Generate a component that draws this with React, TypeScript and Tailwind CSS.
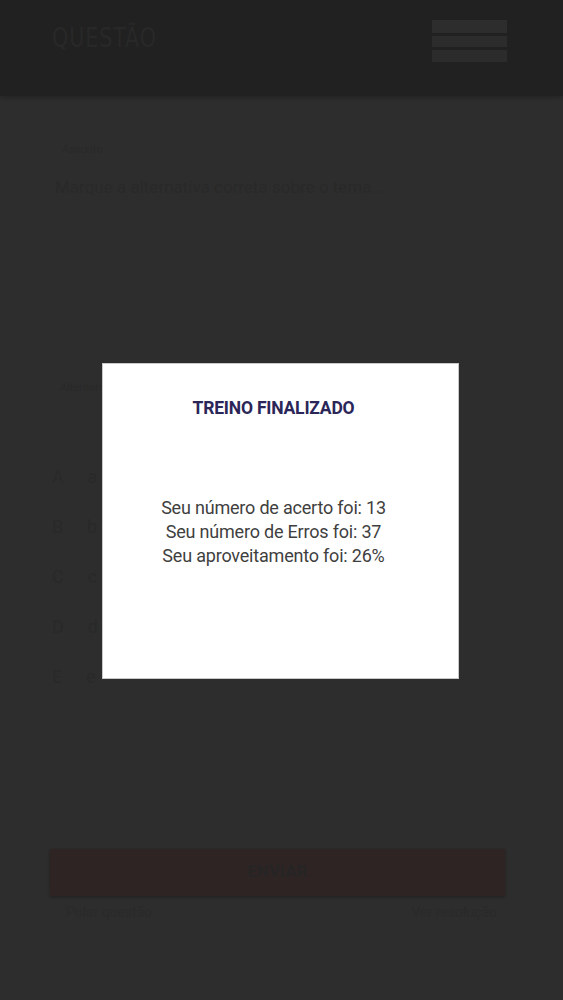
import React from "react";

export default function App() {
  return (
    <div className="relative min-h-[1000px] w-full bg-[#2d2d2d] font-['Roboto',sans-serif] overflow-hidden">
      {/* header */}
      <header className="flex h-[96px] items-start justify-between bg-[#212121] px-[52px] pt-[20px] pr-[56px] shadow-[0_2px_4px_rgba(0,0,0,0.2)]">
        <div className="mt-[3px] text-[26px] leading-[30px] tracking-[1px] text-[#282828] font-['DejaVu_Sans',sans-serif] [transform:scaleX(0.8)] origin-left">
          QUESTÃO
        </div>
        <div className="flex w-[75px] flex-col gap-[3px]">
          <div className="h-[13px] bg-[#2d2d2d]" />
          <div className="h-[11px] bg-[#2c2c2c]" />
          <div className="h-[12px] bg-[#2c2c2c]" />
        </div>
      </header>

      {/* background content (dimmed) */}
      <main className="px-[52px]">
        <div className="mt-[46px] ml-[10px] text-[11px] text-[#292929]">Assunto</div>
        <div className="mt-[16px] ml-[3px] text-[17px] text-[#292929]">
          Marque a alternativa correta sobre o tema...
        </div>
        <div className="mt-[180px] ml-[8px] text-[11px] text-[#292929]">Alternativas</div>
        <div className="mt-[68px] flex flex-col gap-[26px] text-[18px] leading-[24px] text-[#292929]">
          <div className="flex gap-[24px]"><span>A</span><span>a</span></div>
          <div className="flex gap-[24px]"><span>B</span><span>b</span></div>
          <div className="flex gap-[24px]"><span>C</span><span>c</span></div>
          <div className="flex gap-[24px]"><span>D</span><span>d</span></div>
          <div className="flex gap-[24px]"><span>E</span><span>e</span></div>
        </div>
        <div className="mt-[160px] ml-[-2px] mr-[6px] flex h-[47px] items-center justify-center bg-[#2f2424] shadow-[0_1px_3px_rgba(0,0,0,0.3)]">
          <span className="text-[17px] font-bold text-[#262424]">ENVIAR</span>
        </div>
        <div className="mt-[6px] flex justify-between px-[14px] text-[14px] text-[#2a2a2a]">
          <span>Pular questão</span>
          <span>Ver resolução</span>
        </div>
      </main>

      {/* modal */}
      <div className="absolute left-[102px] top-[363px] flex h-[316px] w-[357px] flex-col items-center border border-[#c8c8c8] bg-white">
        <div className="mt-[33px] -ml-[14px] text-[17.5px] font-bold leading-[22px] tracking-[-0.2px] text-[#2b2658]">
          TREINO FINALIZADO
        </div>
        <div className="mt-[77px] -ml-[14px] flex flex-col items-center text-[18px] leading-[24px] tracking-[-0.2px] text-[#3f3f3f]">
          <span>Seu número de acerto foi: 13</span>
          <span>Seu número de Erros foi: 37</span>
          <span>Seu aproveitamento foi: 26%</span>
        </div>
      </div>
    </div>
  );
}
